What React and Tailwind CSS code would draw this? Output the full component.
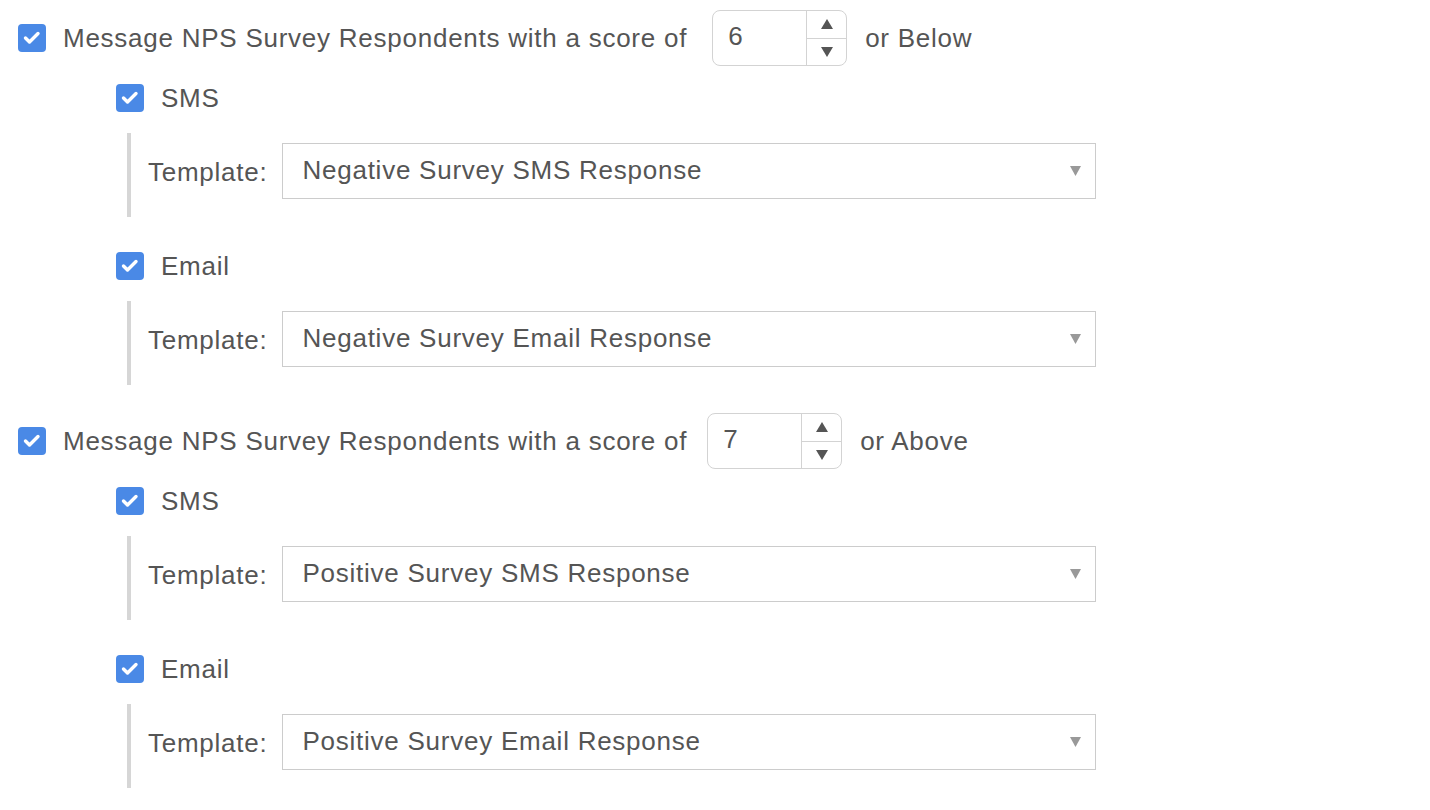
import React from "react";

const font = { fontFamily: '"Liberation Sans", Arial, sans-serif' };
const txt = "text-[26px] tracking-[0.75px] text-[#555]";

function Check() {
  return (
    <span className="flex h-[28px] w-[28px] shrink-0 items-center justify-center rounded-[4px] bg-[#4a89e6]">
      <svg width="28" height="28" viewBox="0 0 28 28" fill="none">
        <path d="M7.5 14 L11.5 18 L20 9.5" stroke="white" strokeWidth="3.4" strokeLinecap="round" strokeLinejoin="round" />
      </svg>
    </span>
  );
}

function Spinner({ value }) {
  return (
    <div className="flex h-[56px] w-[135px] overflow-hidden rounded-[8px] border border-[#d3d3d3] bg-white">
      <div className={`flex flex-1 items-center pl-[15px] pb-[4px] ${txt}`}>{value}</div>
      <div className="flex w-[40px] flex-col border-l border-[#d3d3d3]">
        <div className="flex flex-1 items-center justify-center border-b border-[#d3d3d3]">
          <svg width="12" height="10" viewBox="0 0 12 10"><path d="M6 0 L12 10 L0 10 Z" fill="#555" /></svg>
        </div>
        <div className="flex flex-1 items-center justify-center">
          <svg width="12" height="10" viewBox="0 0 12 10"><path d="M0 0 L12 0 L6 10 Z" fill="#555" /></svg>
        </div>
      </div>
    </div>
  );
}

function Template({ label }) {
  return (
    <div className="ml-[127px] flex h-[84px] border-l-4 border-[#d6d6d6] pt-[10px]">
      <span className={`ml-[17px] mt-[10px] ${txt}`}>Template:</span>
      <div className="ml-[15px] flex h-[56px] w-[814px] items-center justify-between border border-[#cccccc] bg-white pl-[19px] pr-[14px]">
        <span className={`pb-[2px] ${txt}`}>{label}</span>
        <svg width="11" height="10" viewBox="0 0 11 10"><path d="M0 0 L11 0 L5.5 10 Z" fill="#999" /></svg>
      </div>
    </div>
  );
}

function Channel({ name, label, first }) {
  return (
    <div>
      <div className={`ml-[116px] flex h-[28px] items-center gap-[17px] ${first ? "mt-[18px]" : "mt-[35px]"}`}>
        <Check />
        <span className={txt}>{name}</span>
      </div>
      <div className="mt-[21px]">
        <Template label={label} />
      </div>
    </div>
  );
}

function Rule({ score, tail, sms, email, inputGap }) {
  return (
    <div>
      <div className="flex h-[56px] items-center">
        <div className="ml-[18px]"><Check /></div>
        <span className={`ml-[17px] ${txt}`}>Message NPS Survey Respondents with a score of</span>
        <div className={inputGap}><Spinner value={score} /></div>
        <span className={`ml-[18px] ${txt}`}>{tail}</span>
      </div>
      <Channel name="SMS" label={sms} first />
      <Channel name="Email" label={email} />
    </div>
  );
}

export default function App() {
  return (
    <div className="h-[810px] w-[1430px] bg-white pt-[10px]" style={font}>
      <Rule score="6" tail="or Below" sms="Negative Survey SMS Response" email="Negative Survey Email Response" inputGap="ml-[25px]" />
      <div className="mt-[28px]">
        <Rule score="7" tail="or Above" sms="Positive Survey SMS Response" email="Positive Survey Email Response" inputGap="ml-[20px]" />
      </div>
    </div>
  );
}
